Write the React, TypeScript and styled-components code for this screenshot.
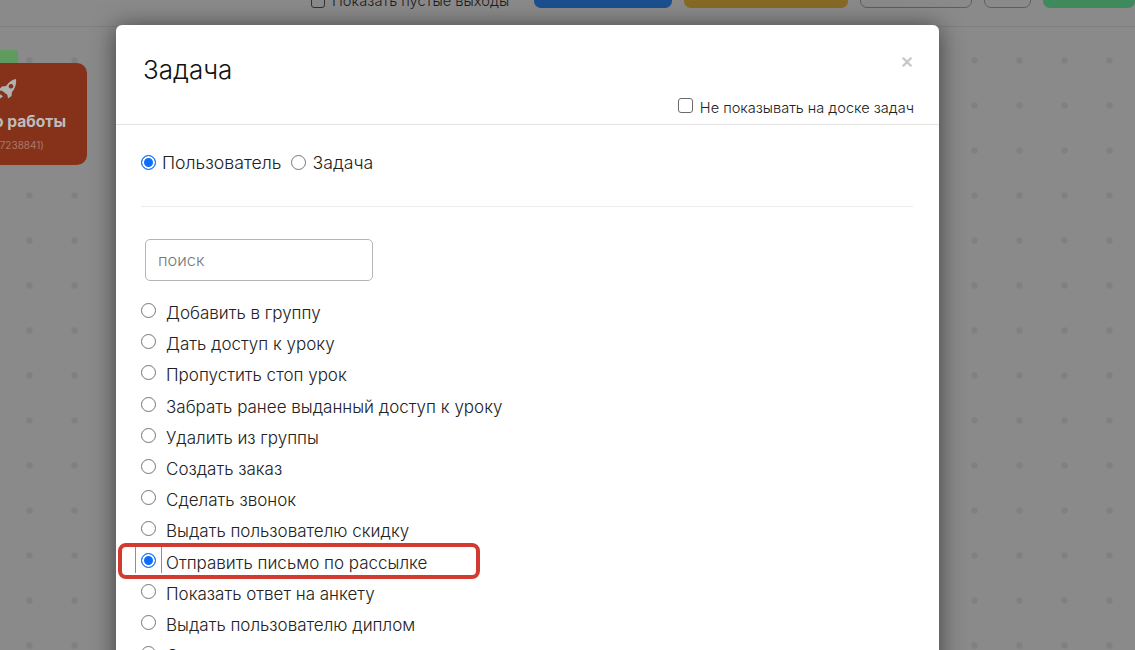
import React from 'react';
import styled, { createGlobalStyle } from 'styled-components';

const Global = createGlobalStyle`
  html, body {
    margin: 0;
    padding: 0;
    height: 650px;
    overflow: hidden;
    font-family: Inter, "Noto Sans", sans-serif;
    color: #212529;
  }
  #root { height: 650px; }
`

const Page = styled.div`
  position: relative;
  width: 1135px;
  height: 650px;
  overflow: hidden;
  background: #8a8a8a;
`

const TopBar = styled.div`
  height: 27px;
  border-bottom: 1px solid #7f7f7f;
  background: #8a8a8a;
  display: flex;
  align-items: flex-end;
  padding: 0 0 18px 311px;
  box-sizing: border-box;
  gap: 12px;
`

const EmptyExits = styled.label`
  display: flex;
  align-items: center;
  gap: 7px;
  width: 211px;
  font-size: 14.7px;
  font-weight: 300;
  line-height: 16px;
  color: #1c1c1c;
  margin-bottom: -1px;
  white-space: nowrap;
`

const BarCheck = styled.span`
  width: 14px;
  height: 14px;
  border: 1px solid #333;
  border-radius: 3px;
  box-sizing: border-box;
  flex-shrink: 0;
`

const BarButton = styled.div<{bg: string; w: number; line?: boolean}>`
  width: ${props => props.w}px;
  height: 20px;
  border-radius: 0 0 7px 7px;
  background: ${props => props.bg};
  border: ${props => props.line ? '1px solid #5e5e5e' : 'none'};
  box-sizing: border-box;
  flex-shrink: 0;
`

const Canvas = styled.div`
  height: 623px;
  background-image: radial-gradient(circle, #808080 2.5px, transparent 4px);
  background-size: 45px 45px;
  background-position: 7px 11px;
`

const GreenTab = styled.div`
  position: absolute;
  left: 0;
  top: 50px;
  width: 18px;
  height: 20px;
  background: #5f9a5f;
  border-radius: 0 3px 0 0;
`

const Node = styled.div`
  position: absolute;
  left: -60px;
  top: 63px;
  width: 147px;
  height: 102px;
  background: #86321a;
  border-radius: 10px;
  color: #bdbdbd;
  display: flex;
  flex-direction: column;
  align-items: flex-end;
`

const NodeIcon = styled.svg`
  position: absolute;
  left: 57px;
  top: 15px;
  width: 20px;
  height: 23px;
`

const NodeTitle = styled.div`
  margin: 49px 21px 0 0;
  font-size: 15.6px;
  line-height: 20px;
  font-weight: 700;
  white-space: nowrap;
`

const NodeId = styled.div`
  margin: 6px 43px 0 0;
  font-size: 10px;
  line-height: 14px;
  color: #a87a6a;
  white-space: nowrap;
`

const Modal = styled.div`
  position: absolute;
  left: 116px;
  top: 25px;
  width: 823px;
  height: 700px;
  background: #fff;
  border-radius: 6px;
  box-shadow: 0 2px 24px rgba(0, 0, 0, 0.55);
`

const Header = styled.div`
  position: relative;
  height: 99px;
  border-bottom: 1px solid #e3e3e3;
`

const Title = styled.h4`
  position: absolute;
  left: 27px;
  top: 28px;
  margin: 0;
  font-size: 26px;
  line-height: 34px;
  font-weight: 300;
  color: #111;
`

const Close = styled.span`
  position: absolute;
  right: 25px;
  top: 24px;
  font-size: 21px;
  line-height: 24px;
  font-weight: 500;
  color: #c6c6c6;
`

const HideRow = styled.label`
  position: absolute;
  right: 25px;
  top: 73px;
  display: flex;
  align-items: center;
  gap: 7px;
  font-size: 14.55px;
  font-weight: 300;
  line-height: 20px;
  color: #222;
`

const HideBox = styled.span`
  width: 15px;
  height: 15px;
  margin-top: -5px;
  border: 1px solid #6b6b6b;
  border-radius: 3px;
  box-sizing: border-box;
`

const Body = styled.div`
  padding: 25px 26px 0 25px;
`

const TypeRow = styled.div`
  display: flex;
  align-items: center;
  height: 24px;
  font-size: 17.7px;
  font-weight: 300;
  color: #222;
`

const TypeLabel = styled.span`
  margin: 0 10px 0 6px;
`

const Radio = styled.span<{checked?: boolean}>`
  display: inline-block;
  width: 15px;
  height: 15px;
  border-radius: 50%;
  box-sizing: border-box;
  flex-shrink: 0;
  background: ${props => props.checked ? '#0d6efd' : '#fff'};
  border: 1px solid ${props => props.checked ? '#0d6efd' : '#767676'};
  box-shadow: ${props => props.checked ? 'inset 0 0 0 2px #fff' : 'none'};
`

const Divider = styled.hr`
  margin: 32px 0 32px;
  border: none;
  border-top: 1px solid #ececec;
`

const Search = styled.input`
  display: block;
  width: 228px;
  height: 42px;
  margin-left: 4px;
  padding: 0 12px;
  box-sizing: border-box;
  border: 1px solid #b5b5b5;
  border-radius: 5px;
  font-family: inherit;
  font-size: 16.4px;
  font-weight: 300;
  &::placeholder { color: #777; opacity: 1; }
`

const Options = styled.div`
  margin-top: 16px;
`

const Option = styled.div`
  display: flex;
  height: 31.2px;
  font-size: 17px;
  font-weight: 300;
  line-height: 33px;
  color: #222;
  white-space: nowrap;
`

const OptionRadio = styled.span`
  position: relative;
  width: 25px;
  height: 31px;
  flex-shrink: 0;
  box-sizing: border-box;
  line-height: 31px;
`

const Focus = styled.span`
  position: absolute;
  left: -6px;
  top: 0;
  width: 27px;
  height: 26px;
  border-left: 1px solid #4aa8d0;
  border-right: 1px solid #4aa8d0;
  box-sizing: border-box;
`

const Highlight = styled.div`
  position: absolute;
  left: 118px;
  top: 543px;
  width: 362px;
  height: 36px;
  border: 4px solid #d2392f;
  border-radius: 8px;
  box-sizing: border-box;
`

const options = [
  'Добавить в группу',
  'Дать доступ к уроку',
  'Пропустить стоп урок',
  'Забрать ранее выданный доступ к уроку',
  'Удалить из группы',
  'Создать заказ',
  'Сделать звонок',
  'Выдать пользователю скидку',
  'Отправить письмо по рассылке',
  'Показать ответ на анкету',
  'Выдать пользователю диплом',
  'Создать задачу',
];

export default function App() {
  return (
    <Page>
      <Global />
      <TopBar>
        <EmptyExits><BarCheck />Показать пустые выходы</EmptyExits>
        <BarButton bg="#1c4f8f" w={138} />
        <BarButton bg="#866a26" w={164} />
        <BarButton bg="#8a8a8a" w={112} line />
        <BarButton bg="#8a8a8a" w={47} line />
        <BarButton bg="#3f8a5c" w={92} />
      </TopBar>
      <Canvas />
      <GreenTab />
      <Node>
        <NodeIcon viewBox="0 0 20 23" fill="#b0b0b0">
          <path fillRule="evenodd" d="M19 1c.6 5-.8 9.500-4 13l-.5 4-3.500 2.500-.6-3.500-5-4-3.900-1L5 8.500l4-.5C12 4 15 1.500 19 1zm-5 5a2.300 2.300 0 1 0 .01 0zM3.500 16l2.500 2.500L2 21z" />
        </NodeIcon>
        <NodeTitle>о работы</NodeTitle>
        <NodeId>(97238841)</NodeId>
      </Node>
      <Modal>
        <Header>
          <Title>Задача</Title>
          <Close>×</Close>
          <HideRow><HideBox />Не показывать на доске задач</HideRow>
        </Header>
        <Body>
          <TypeRow>
            <Radio checked />
            <TypeLabel>Пользователь</TypeLabel>
            <Radio />
            <TypeLabel>Задача</TypeLabel>
          </TypeRow>
          <Divider />
          <Search placeholder="поиск" />
          <Options>
            {options.map((o, i) => (
              <Option key={o}>
                <OptionRadio>
                  {i === 8 && <Focus />}
                  <Radio checked={i === 8} />
                </OptionRadio>
                {o}
              </Option>
            ))}
          </Options>
        </Body>
      </Modal>
      <Highlight />
    </Page>
  );
}
